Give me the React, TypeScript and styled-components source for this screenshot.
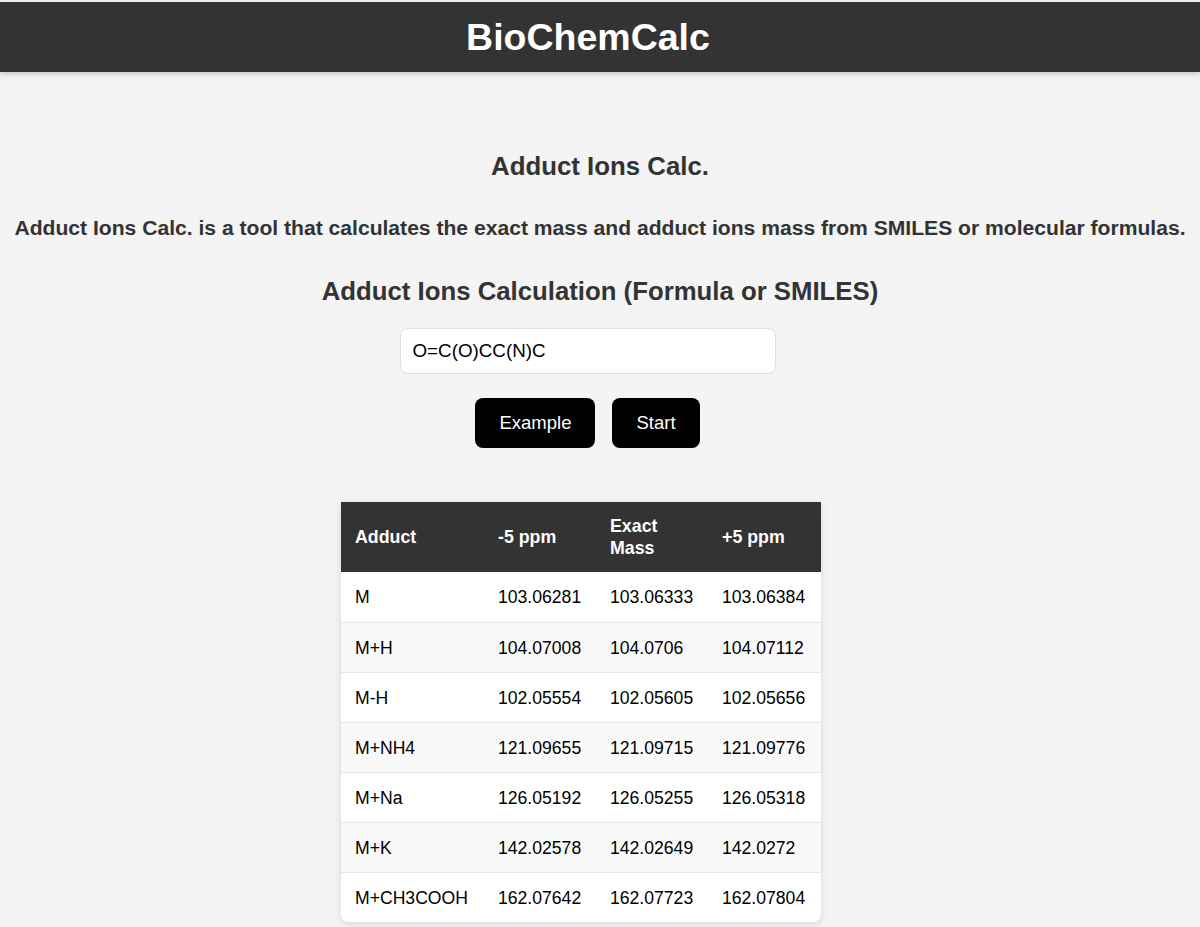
import React from "react";
import styled, { createGlobalStyle } from "styled-components";

const GlobalStyle = createGlobalStyle`
  html, body {
    margin: 0;
    padding: 0;
    background: #f4f4f4;
    font-family: "Liberation Sans", Arial, sans-serif;
    color: #333;
  }
`;

const rows = [
  ["M", "103.06281", "103.06333", "103.06384"],
  ["M+H", "104.07008", "104.0706", "104.07112"],
  ["M-H", "102.05554", "102.05605", "102.05656"],
  ["M+NH4", "121.09655", "121.09715", "121.09776"],
  ["M+Na", "126.05192", "126.05255", "126.05318"],
  ["M+K", "142.02578", "142.02649", "142.0272"],
  ["M+CH3COOH", "162.07642", "162.07723", "162.07804"],
];

const App = () => {
  return (
    <>
      <GlobalStyle />
      <Page>
        <Header>
          <Brand>BioChemCalc</Brand>
        </Header>
        <Main>
          <PageTitle>Adduct Ions Calc.</PageTitle>
          <Lead>
            Adduct Ions Calc. is a tool that calculates the exact mass and adduct ions mass from
            SMILES or molecular formulas.
          </Lead>
          <SectionTitle>Adduct Ions Calculation (Formula or SMILES)</SectionTitle>
          <Form>
            <FormulaInput defaultValue="O=C(O)CC(N)C" />
            <ButtonRow>
              <ActionButton>Example</ActionButton>
              <ActionButton>Start</ActionButton>
            </ButtonRow>
          </Form>
          <TableWrap>
            <ResultTable>
              <colgroup>
                <col style={{ width: 143 }} />
                <col style={{ width: 112 }} />
                <col style={{ width: 112 }} />
                <col style={{ width: 113 }} />
              </colgroup>
              <thead>
                <tr>
                  <HeadCell>Adduct</HeadCell>
                  <HeadCell>-5 ppm</HeadCell>
                  <HeadCell>
                    Exact
                    <br />
                    Mass
                  </HeadCell>
                  <HeadCell>+5 ppm</HeadCell>
                </tr>
              </thead>
              <tbody>
                {rows.map((r, i) => (
                  <Row key={r[0]} $odd={i % 2 === 1} $last={i === rows.length - 1}>
                    {r.map((c) => (
                      <Cell key={c}>{c}</Cell>
                    ))}
                  </Row>
                ))}
              </tbody>
            </ResultTable>
          </TableWrap>
        </Main>
      </Page>
    </>
  );
};

export default App;

const Page = styled.div`
  min-height: 927px;
  padding-top: 2px;
  background: #f4f4f4;
`;

const Header = styled.header`
  height: 70px;
  background: #333;
  display: flex;
  align-items: center;
  justify-content: center;
  box-shadow: 0 2px 6px rgba(0, 0, 0, 0.2);
`;

const Brand = styled.h1`
  margin: 0 24px 0 0;
  padding-top: 2px;
  color: #fff;
  font-size: 37.5px;
  font-weight: bold;
  line-height: 1;
`;

const Main = styled.main`
  display: flex;
  flex-direction: column;
  align-items: center;
  padding-top: 79px;
`;

const PageTitle = styled.h2`
  margin: 0;
  font-size: 25.8px;
  line-height: 30px;
  font-weight: bold;
  color: #333;
`;

const Lead = styled.p`
  margin: 35px 0 0;
  font-size: 21.1px;
  line-height: 24px;
  font-weight: bold;
  color: #333;
  text-align: center;
  white-space: nowrap;
`;

const SectionTitle = styled.h3`
  margin: 36px 0 0;
  font-size: 25.75px;
  line-height: 30px;
  font-weight: bold;
  color: #333;
`;

const Form = styled.div`
  display: flex;
  flex-direction: column;
  align-items: center;
  margin-top: 22px;
  margin-right: 25px;
`;

const FormulaInput = styled.input`
  box-sizing: border-box;
  width: 376px;
  height: 46px;
  padding: 0 12px;
  border: 1px solid #ddd;
  border-radius: 8px;
  background: #fff;
  font-family: "Liberation Sans", Arial, sans-serif;
  font-size: 18.8px;
  color: #000;
  outline: none;
`;

const ButtonRow = styled.div`
  display: flex;
  gap: 17px;
  margin-top: 24px;
`;

const ActionButton = styled.button`
  height: 50px;
  padding: 0 24px;
  border: 0;
  border-radius: 8px;
  background: #000;
  color: #fff;
  font-family: "Liberation Sans", Arial, sans-serif;
  font-size: 18.5px;
  cursor: pointer;
`;

const TableWrap = styled.div`
  margin-top: 54px;
  margin-right: 38px;
  width: 480px;
  overflow: hidden;
  background: #fff;
  box-shadow: 0 2px 8px rgba(0, 0, 0, 0.12);
  border-radius: 0 0 8px 8px;
`;

const ResultTable = styled.table`
  width: 480px;
  table-layout: fixed;
  border-collapse: collapse;
`;

const HeadCell = styled.th`
  height: 70px;
  padding: 0 14px;
  background: #333;
  color: #fff;
  font-size: 17.8px;
  font-weight: bold;
  text-align: left;
  line-height: 22px;
`;

const Row = styled.tr<{ $odd: boolean; $last: boolean }>`
  height: 50px;
  background: ${(p) => (p.$odd ? "#f9f9f9" : "#fff")};
  border-bottom: ${(p) => (p.$last ? "0" : "1px solid #e6e6e6")};
`;

const Cell = styled.td`
  padding: 2px 14px 0;
  font-size: 17.6px;
  color: #000;
  white-space: nowrap;
`;
